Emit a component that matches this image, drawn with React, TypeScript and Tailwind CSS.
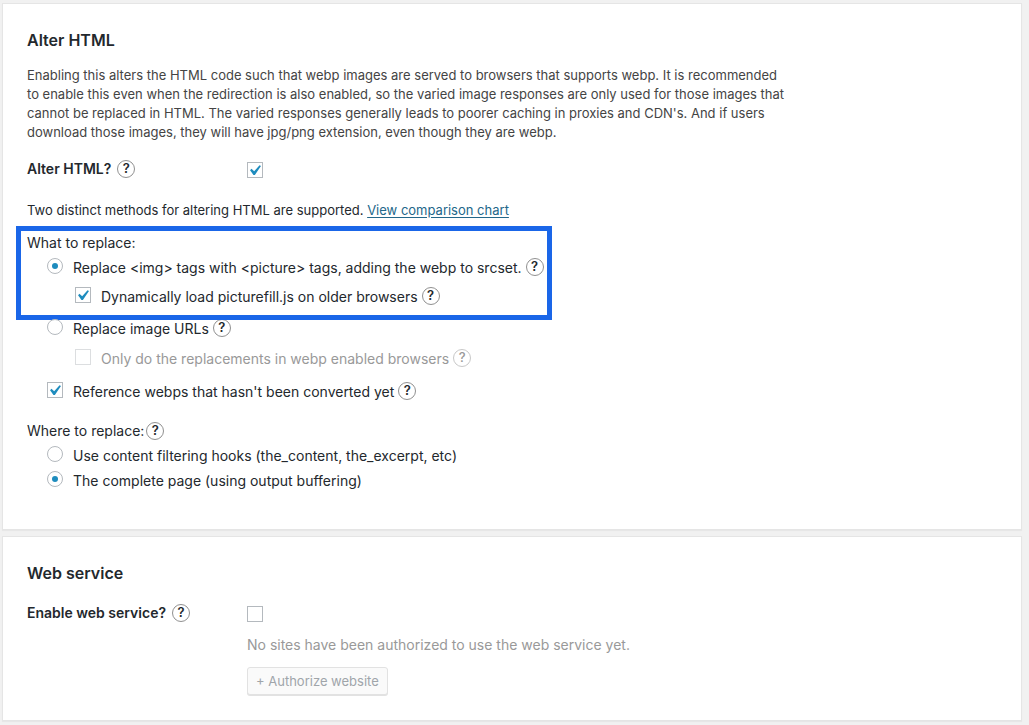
import React from 'react';

// ---------------------------------------------------------------------------
// Small controls
// ---------------------------------------------------------------------------

function HelpIcon({ label, muted = false }: { label: string; muted?: boolean }) {
  return (
    <button
      type="button"
      aria-label={label}
      className={
        muted
          ? 'flex size-[18px] shrink-0 items-center justify-center rounded-full border border-[#c8c8c8] text-[13px] leading-none font-medium text-[#999]'
          : 'flex size-[18px] shrink-0 items-center justify-center rounded-full border border-[#909090] text-[13px] leading-none font-semibold text-[#23282d]'
      }
    >
      ?
    </button>
  );
}

interface ControlProps {
  id: string;
  checked?: boolean;
  disabled?: boolean;
}

function Checkbox({ id, checked = false, disabled = false }: ControlProps) {
  return (
    <span className="relative size-4 shrink-0">
      <input
        id={id}
        type="checkbox"
        defaultChecked={checked}
        disabled={disabled}
        className="peer block size-4 appearance-none border border-[#b4b9be] bg-white disabled:border-[#dcdee0]"
      />
      <svg
        viewBox="0 0 20 20"
        className="pointer-events-none absolute -top-[2px] -left-[3px] hidden size-[21px] fill-[#1e8cbe] peer-checked:block"
        aria-hidden="true"
      >
        <path d="M14.83 4.89l1.34.94-5.81 8.38H9.02L5.78 9.67l1.34-1.25 2.57 2.4z" />
      </svg>
    </span>
  );
}

function Radio({ id, name, checked = false }: ControlProps & { name: string }) {
  return (
    <span className="relative size-4 shrink-0">
      <input
        id={id}
        name={name}
        type="radio"
        defaultChecked={checked}
        className="peer block size-4 appearance-none rounded-full border border-[#b4b9be] bg-white"
      />
      <span className="pointer-events-none absolute inset-[5px] hidden rounded-full bg-[#1e8cbe] peer-checked:block" />
    </span>
  );
}

interface OptionProps extends ControlProps {
  label: string;
  name?: string;
  help?: boolean;
  className?: string;
}

function Option({ id, label, name, checked, disabled, help, className = '' }: OptionProps) {
  return (
    <div className={`flex h-[25px] items-center ${className}`}>
      <div className="flex items-center pb-[3px]">
        {name ? (
          <Radio id={id} name={name} checked={checked} />
        ) : (
          <Checkbox id={id} checked={checked} disabled={disabled} />
        )}
      </div>
      <label htmlFor={id} className={disabled ? 'pl-2.5 text-[#999]' : 'pl-2.5'}>
        {label}
      </label>
      {help && (
        <div className="pb-0.5 pl-1">
          <HelpIcon label={`Help: ${label}`} muted={disabled} />
        </div>
      )}
    </div>
  );
}

function Panel({ title, children }: { title: string; children: React.ReactNode }) {
  return (
    <section className="border border-[#e5e5e5] bg-white px-6 pt-6 shadow-[0_1px_1px_rgba(0,0,0,0.04)]">
      <h2 className="text-base leading-6 font-semibold text-[#23282d]">{title}</h2>
      {children}
    </section>
  );
}

// ---------------------------------------------------------------------------
// Page
// ---------------------------------------------------------------------------

export default function App() {
  return (
    <main className="flex min-h-screen flex-col gap-1.5 bg-[#f1f1f1] pt-[3px] pr-[7px] pb-1 pl-0.5 font-[Inter,'Liberation_Sans',sans-serif] text-sm text-[#23282d]">
      <Panel title="Alter HTML">
        <p className="mt-3.5 max-w-[762px] text-[13px] leading-[19px] text-[#444]">
          Enabling this alters the HTML code such that webp images are served to browsers that supports webp. It is
          recommended to enable this even when the redirection is also enabled, so the varied image responses are only
          used for those images that cannot be replaced in HTML. The varied responses generally leads to poorer caching
          in proxies and CDN's. And if users download those images, they will have jpg/png extension, even though they
          are webp.
        </p>

        <div className="mt-[15px] flex h-[25px] items-center">
          <div className="flex w-[220px] items-center gap-1.5 pb-0.5">
            <label htmlFor="alter-html" className="font-semibold">Alter HTML?</label>
            <HelpIcon label="Help: Alter HTML" />
          </div>
          <Checkbox id="alter-html" checked />
        </div>

        <p className="mt-4 text-[13px] leading-[25px]">
          Two distinct methods for altering HTML are supported.{' '}
          <a href="#comparison" className="text-[#23678a] underline underline-offset-2">View comparison chart</a>
        </p>

        <fieldset className="mt-[7px]">
          {/* Highlighted choice, framed a little outside the text column */}
          <div className="relative">
            <div className="pointer-events-none absolute -top-1 -bottom-[11px] -left-[11px] w-[536px] border-[5px] border-[#1a66e8]" />
            <legend className="h-[25px] leading-[25px]">What to replace:</legend>
            <Option
              id="replace-picture"
              name="what"
              label="Replace <img> tags with <picture> tags, adding the webp to srcset."
              checked
              help
              className="pl-5"
            />
            <Option
              id="picturefill"
              label="Dynamically load picturefill.js on older browsers"
              checked
              help
              className="mt-1 pl-12"
            />
          </div>
          <Option id="replace-urls" name="what" label="Replace image URLs" help className="mt-[7px] pl-5" />
          <Option
            id="only-webp"
            label="Only do the replacements in webp enabled browsers"
            disabled
            help
            className="mt-[5px] pl-12"
          />
          <Option
            id="reference"
            label="Reference webps that hasn't been converted yet"
            checked
            help
            className="mt-2 pl-5"
          />
        </fieldset>

        <fieldset className="mt-3.5 pb-9">
          <div className="flex h-[25px] items-center gap-0.5">
            <legend>Where to replace:</legend>
            <HelpIcon label="Help: Where to replace" />
          </div>
          <Option
            id="hooks"
            name="where"
            label="Use content filtering hooks (the_content, the_excerpt, etc)"
            className="pl-5"
          />
          <Option id="complete" name="where" label="The complete page (using output buffering)" checked className="pl-5" />
        </fieldset>
      </Panel>

      <Panel title="Web service">
        <div className="mt-4 flex h-[25px] items-center">
          <div className="flex w-[220px] items-center gap-1.5 pb-0.5">
            <label htmlFor="web-service" className="font-semibold">Enable web service?</label>
            <HelpIcon label="Help: Enable web service" />
          </div>
          <Checkbox id="web-service" />
        </div>
        <div className="pt-1.5 pb-[25px] pl-[220px]">
          <p className="leading-[25px] text-[#999]">No sites have been authorized to use the web service yet.</p>
          <button
            type="button"
            disabled
            className="mt-2.5 h-7 rounded-[3px] border border-[#e2e2e2] bg-[#fafafa] px-2 text-[13px] text-[#a0a5aa] shadow-[0_1px_0_#e2e2e2]"
          >
            + Authorize website
          </button>
        </div>
      </Panel>
    </main>
  );
}
